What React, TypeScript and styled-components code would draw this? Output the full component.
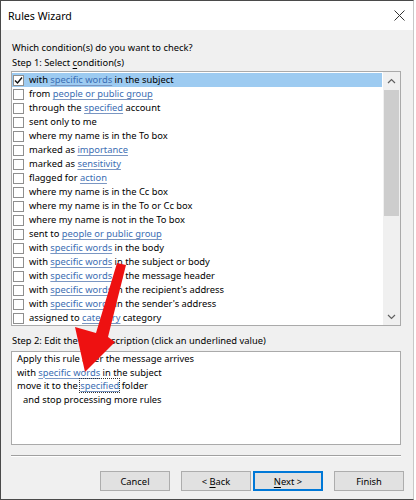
import * as React from 'react';
import styled, { createGlobalStyle } from 'styled-components';

const GlobalStyle = createGlobalStyle`
  html, body {
    margin: 0;
    padding: 0;
    background: #ffffff;
  }
  body {
    font-family: 'Noto Sans', 'Open Sans', sans-serif;
    font-size: 9.35px;
    color: #000000;
  }
`;

type RowProps = {
  selected?: boolean;
};

type ButtonProps = {
  focused?: boolean;
};

const StyledWindow = styled.div`
  position: relative;
  width: 412px;
  height: 498px;
  border: 1px solid #4a4a4a;
  border-right-color: #c8c8c8;
  background: #f0f0f0;
  display: flex;
  flex-direction: column;
  overflow: hidden;
`;

const StyledTitleBar = styled.div`
  height: 29px;
  background: #ffffff;
  display: flex;
  align-items: center;
  justify-content: space-between;
  padding: 0 7px 0 7px;
  font-size: 10.6px;
`;

const StyledClose = styled.svg`
  width: 11px;
  height: 11px;
  margin-right: 1px;
`;

const StyledContent = styled.div`
  display: flex;
  flex-direction: column;
  padding: 10px 12px 0 10px;
`;

const StyledLabel = styled.div`
  height: 15px;
  line-height: 15px;
  padding-left: 1px;
  white-space: nowrap;
`;

const StyledListBox = styled.div`
  margin-top: 1px;
  height: 253px;
  border: 1px solid #aaaaaa;
  background: #ffffff;
  display: flex;
  overflow: hidden;
`;

const StyledRows = styled.div`
  flex: 1;
  display: flex;
  flex-direction: column;
  padding-top: 1px;
`;

const StyledRow = styled.div<RowProps>`
  height: 14px;
  flex-shrink: 0;
  display: flex;
  align-items: center;
  gap: 5px;
  padding-left: 1px;
  white-space: nowrap;
  line-height: 14px;
  background: ${({ selected = false }) => (selected ? '#9dcbf1' : 'transparent')};
`;

const StyledRowText = styled.span`
  white-space: pre;
`;

const StyledCheck = styled.span`
  width: 9px;
  height: 9px;
  border: 1px solid #8e8e8e;
  background: #ffffff;
  display: flex;
  align-items: center;
  justify-content: center;
  flex-shrink: 0;
`;

const StyledLink = styled.span`
  color: #3b6db3;
  text-decoration: underline;
  text-decoration-color: #7a96c2;
  text-underline-offset: 2px;
`;

const StyledFocusLink = styled(StyledLink)`
  outline: 1px dotted #333333;
  outline-offset: 0px;
`;

const StyledScrollbar = styled.div`
  width: 17px;
  background: #f0f0f0;
  display: flex;
  flex-direction: column;
  border-left: 1px solid #ffffff;
`;

const StyledScrollArrow = styled.div`
  height: 17px;
  display: flex;
  align-items: center;
  justify-content: center;
`;

const StyledTrack = styled.div`
  flex: 1;
  display: flex;
  flex-direction: column;
  padding: 1px 1px;
`;

const StyledThumb = styled.div`
  height: 126px;
  background: #cdcdcd;
`;

const StyledStep2 = styled(StyledLabel)`
  margin-top: 7px;
  height: 16px;
  line-height: 16px;
`;

const StyledDescription = styled.div`
  margin-top: 2px;
  height: 92px;
  border: 1px solid #aaaaaa;
  background: #ffffff;
  padding: 0 5px;
  display: flex;
  flex-direction: column;
`;

const StyledDescLine = styled.div<{ indent?: boolean }>`
  height: 13.7px;
  line-height: 13.7px;
  white-space: pre;
  padding-left: ${({ indent = false }) => (indent ? '6px' : '0')};
`;

const StyledSeparator = styled.div`
  margin: 10px 12px 0 10px;
  height: 1px;
  background: #a0a0a0;
  border-bottom: 1px solid #ffffff;
`;

const StyledFooter = styled.div`
  display: flex;
  justify-content: flex-end;
  padding: 14px 9px 0 0;
`;

const StyledButton = styled.div<ButtonProps>`
  width: ${({ focused = false }) => (focused ? '66px' : '68px')};
  height: ${({ focused = false }) => (focused ? '16px' : '18px')};
  border: ${({ focused = false }) => (focused ? '2px solid #0078d7' : '1px solid #adadad')};
  background: #e1e1e1;
  display: flex;
  align-items: center;
  justify-content: center;
  white-space: pre;
  margin-left: 11px;
  &:nth-child(3) {
    margin-left: 2px;
  }
`;

const StyledKey = styled.span`
  text-decoration: underline;
  text-underline-offset: 2px;
`;

const StyledArrow = styled.svg`
  position: absolute;
  left: 0;
  top: 0;
  pointer-events: none;
`;

type Part = string | { link: string; focus?: boolean };

const conditions: Part[][] = [
  ['with ', { link: 'specific words' }, ' in the subject'],
  ['from ', { link: 'people or public group' }],
  ['through the ', { link: 'specified' }, ' account'],
  ['sent only to me'],
  ['where my name is in the To box'],
  ['marked as ', { link: 'importance' }],
  ['marked as ', { link: 'sensitivity' }],
  ['flagged for ', { link: 'action' }],
  ['where my name is in the Cc box'],
  ['where my name is in the To or Cc box'],
  ['where my name is not in the To box'],
  ['sent to ', { link: 'people or public group' }],
  ['with ', { link: 'specific words' }, ' in the body'],
  ['with ', { link: 'specific words' }, ' in the subject or body'],
  ['with ', { link: 'specific words' }, ' in the message header'],
  ['with ', { link: 'specific words' }, " in the recipient's address"],
  ['with ', { link: 'specific words' }, " in the sender's address"],
  ['assigned to ', { link: 'category' }, ' category'],
];

function renderParts(parts: Part[]) {
  return parts.map((part, i) => {
    if (typeof part === 'string') return <span key={i}>{part}</span>;
    if (part.focus) return <StyledFocusLink key={i}>{part.link}</StyledFocusLink>;
    return <StyledLink key={i}>{part.link}</StyledLink>;
  });
}

export default function App() {
  return (
    <>
      <GlobalStyle />
      <StyledWindow>
        <StyledTitleBar>
          <span>Rules Wizard</span>
          <StyledClose viewBox="0 0 11 11">
            <path d="M0.5 0.5 L10.5 10.5 M10.5 0.5 L0.5 10.5" stroke="#333" strokeWidth="1" fill="none" />
          </StyledClose>
        </StyledTitleBar>
        <StyledContent>
          <StyledLabel>Which condition(s) do you want to check?</StyledLabel>
          <StyledLabel>
            Step 1: Select <StyledKey>c</StyledKey>ondition(s)
          </StyledLabel>
          <StyledListBox>
            <StyledRows>
              {conditions.map((parts, i) => (
                <StyledRow key={i} selected={i === 0}>
                  <StyledCheck>
                    {i === 0 && (
                      <svg width="9" height="9" viewBox="0 0 9 9">
                        <path d="M1 4.5 L3.5 7 L8 1.5" stroke="#111" strokeWidth="1.4" fill="none" />
                      </svg>
                    )}
                  </StyledCheck>
                  <StyledRowText>{renderParts(parts)}</StyledRowText>
                </StyledRow>
              ))}
            </StyledRows>
            <StyledScrollbar>
              <StyledScrollArrow>
                <svg width="9" height="6" viewBox="0 0 9 6">
                  <path d="M1 5 L4.5 1.5 L8 5" stroke="#606060" strokeWidth="1.2" fill="none" />
                </svg>
              </StyledScrollArrow>
              <StyledTrack>
                <StyledThumb />
              </StyledTrack>
              <StyledScrollArrow>
                <svg width="9" height="6" viewBox="0 0 9 6">
                  <path d="M1 1 L4.5 4.5 L8 1" stroke="#606060" strokeWidth="1.2" fill="none" />
                </svg>
              </StyledScrollArrow>
            </StyledScrollbar>
          </StyledListBox>
          <StyledStep2>Step 2: Edit the rule description (click an underlined value)</StyledStep2>
          <StyledDescription>
            <StyledDescLine>Apply this rule after the message arrives</StyledDescLine>
            <StyledDescLine>
              {'with '}
              <StyledLink>specific words</StyledLink>
              {' in the subject'}
            </StyledDescLine>
            <StyledDescLine>
              {'move it to the '}
              <StyledFocusLink>specified</StyledFocusLink>
              {' folder'}
            </StyledDescLine>
            <StyledDescLine indent>and stop processing more rules</StyledDescLine>
          </StyledDescription>
        </StyledContent>
        <StyledSeparator />
        <StyledFooter>
          <StyledButton>Cancel</StyledButton>
          <StyledButton>
            {'< '}
            <StyledKey>B</StyledKey>
            {'ack'}
          </StyledButton>
          <StyledButton focused>
            <StyledKey>N</StyledKey>
            {'ext >'}
          </StyledButton>
          <StyledButton>Finish</StyledButton>
        </StyledFooter>
        <StyledArrow width="414" height="500" viewBox="0 0 414 500">
          <polygon
            points="116,262 125,264 107,336 114,341 84,371 74,326 95,332"
            fill="#ee1111"
          />
        </StyledArrow>
      </StyledWindow>
    </>
  );
}
